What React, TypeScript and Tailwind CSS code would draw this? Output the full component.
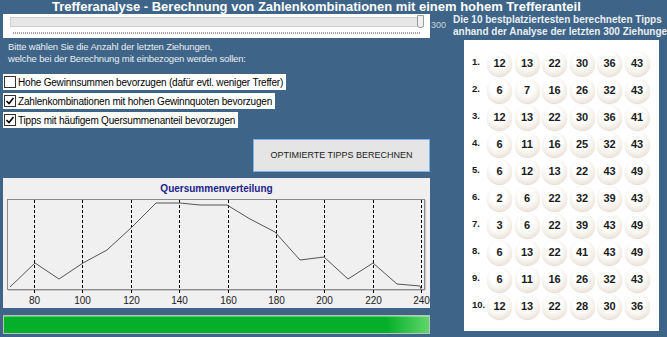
const tipps = [
  [12, 13, 22, 30, 36, 43],
  [6, 7, 16, 26, 32, 43],
  [12, 13, 22, 30, 36, 41],
  [6, 11, 16, 25, 32, 43],
  [6, 12, 13, 22, 43, 49],
  [2, 6, 22, 32, 39, 43],
  [3, 6, 22, 39, 43, 49],
  [6, 13, 22, 41, 43, 49],
  [6, 11, 16, 26, 32, 43],
  [12, 13, 22, 28, 30, 36],
];

const options = [
  { label: "Hohe Gewinnsummen bevorzugen (dafür evtl. weniger Treffer)", checked: false },
  { label: "Zahlenkombinationen mit hohen Gewinnquoten bevorzugen", checked: true },
  { label: "Tipps mit häufigem Quersummenanteil bevorzugen", checked: true },
];

// Quersummen-Kurve in Plot-Koordinaten
const curve = [
  [7, 88], [32, 64], [56, 80], [80, 64], [104, 51], [129, 28], [153, 4], [177, 4],
  [197, 6], [224, 6], [247, 20], [272, 33], [297, 61], [321, 58], [345, 80],
  [370, 64], [394, 85], [417, 87], [418, 90],
];

const labels = [80, 100, 120, 140, 160, 180, 200, 220, 240];

function Chart() {
  return (
    <svg width="427" height="109" className="block">
      <rect x="4.5" y="0.5" width="417" height="90" fill="#f0f0f0" stroke="#8a8a8a" />
      <line x1="5" y1="91.5" x2="422" y2="91.5" stroke="#c8c8c8" />
      <line x1="422.5" y1="1" x2="422.5" y2="91" stroke="#c8c8c8" />
      {labels.map((l, i) => {
        const x = Math.round(31 + i * 48.375) + 0.5;
        return (
          <g key={l}>
            <line x1={x} y1="1" x2={x} y2="95" stroke="#000" strokeDasharray="3 2" />
            <text x={x} y="105" textAnchor="middle" fontSize="10" fontFamily="Liberation Sans, Arial, sans-serif" fill="#222">
              {l}
            </text>
          </g>
        );
      })}
      <polyline points={curve.map((p) => p.join(",")).join(" ")} fill="none" stroke="#555" strokeWidth="1" />
    </svg>
  );
}

function Ball({ n }: { n: number }) {
  return (
    <div className="w-[25px] h-[25px] rounded-full flex items-center justify-center bg-[radial-gradient(circle_at_45%_38%,#ffffff_38%,#f2ece4_66%,#dacdbd_100%)] shadow-[0_1px_1px_rgba(120,100,80,0.25)]">
      <span className="text-[11px] font-bold text-[#1b1b1b] leading-none">{n}</span>
    </div>
  );
}

export default function App() {
  return (
    <div className="w-[667px] h-[337px] bg-[#3e6487] overflow-hidden font-['Liberation_Sans',Arial,sans-serif] text-[#e9eef3]">
      <div className="h-[14px] pl-[52px] text-[13px] font-bold leading-[14px] text-white whitespace-nowrap">
        Trefferanalyse - Berechnung von Zahlenkombinationen mit einem hohem Trefferanteil
      </div>
      <div className="flex">
        <div className="w-[450px] shrink-0 pl-[3px] flex flex-col">
          <div className="flex items-start">
            <div className="w-[427px] h-[24px] bg-white pt-[3px] pl-[7px] pr-[6px]">
              <div className="relative h-[10px] bg-[#e7e7e7] border border-[#cfcfcf]">
                <div className="absolute right-[-1px] top-[-3px] w-[7px] h-[13px] bg-[#f0f0f0] border border-[#9a9a9a] rounded-b-[3px]" />
              </div>
              <div className="mt-[5px] mx-[3px] h-[2px] bg-[repeating-linear-gradient(90deg,#a0a0a0_0_1px,transparent_1px_2px)]" />
            </div>
            <span className="ml-[1px] mt-[7px] text-[9px] leading-none text-[#c9d4de]">300</span>
          </div>
          <div className="mt-[3px] pl-[5px] text-[9.5px] tracking-[-0.15px] leading-[12px]">
            <div>Bitte wählen Sie die Anzahl der letzten Ziehungen,</div>
            <div>welche bei der Berechnung mit einbezogen werden sollen:</div>
          </div>
          <div className="mt-[9px] flex flex-col gap-[3px] items-start">
            {options.map((o) => (
              <div key={o.label} className="h-[16px] bg-white flex items-center pl-[1px] pr-[3px]">
                <div className="w-[12px] h-[12px] border border-[#333] bg-white flex items-center justify-center">
                  {o.checked && (
                    <svg width="10" height="10" viewBox="0 0 10 10">
                      <path d="M1.5 5 L4 7.5 L8.5 2" fill="none" stroke="#000" strokeWidth="1.6" />
                    </svg>
                  )}
                </div>
                <span className="ml-[2px] text-[10px] tracking-[-0.2px] text-black whitespace-nowrap">{o.label}</span>
              </div>
            ))}
          </div>
          <div className="mt-[11px] w-[427px] flex justify-end">
            <button className="w-[177px] h-[33px] bg-[#e5e5e5] border border-[#7cb3ea] text-[9px] text-[#222]">
              OPTIMIERTE TIPPS BERECHNEN
            </button>
          </div>
          <div className="mt-[6px] w-[427px] h-[130px] bg-[#f0f0f0] flex flex-col">
            <div className="mt-[5px] text-center text-[10px] font-bold leading-[12px] text-[#20208a]">Quersummenverteilung</div>
            <div className="mt-[4px]">
              <Chart />
            </div>
          </div>
          <div className="mt-[7px] w-[427px] h-[19px] border border-[#b9c3b9] bg-[linear-gradient(90deg,#05af2a_0%,#05af2a_90%,#5fd66a_100%)] shadow-[inset_0_1px_0_rgba(255,255,255,0.35)]" />
        </div>
        <div className="flex flex-col">
          <div className="ml-[3px] text-[10px] font-bold leading-[12px] whitespace-nowrap">
            <div>Die 10 bestplatziertesten berechneten Tipps</div>
            <div>anhand der Analyse der letzten 300 Ziehungen</div>
          </div>
          <div className="mt-[2px] ml-[14px] w-[195px] h-[291px] bg-white pt-[10px] pl-[8px]">
            {tipps.map((t, i) => (
              <div key={i} className="h-[27px] flex items-center">
                <span className="w-[15px] text-[9.5px] font-bold text-[#1b1b1b] -mt-[3px]">{i + 1}.</span>
                <div className="flex gap-[2.5px]">
                  {t.map((n, j) => (
                    <Ball key={j} n={n} />
                  ))}
                </div>
              </div>
            ))}
          </div>
        </div>
      </div>
    </div>
  );
}
